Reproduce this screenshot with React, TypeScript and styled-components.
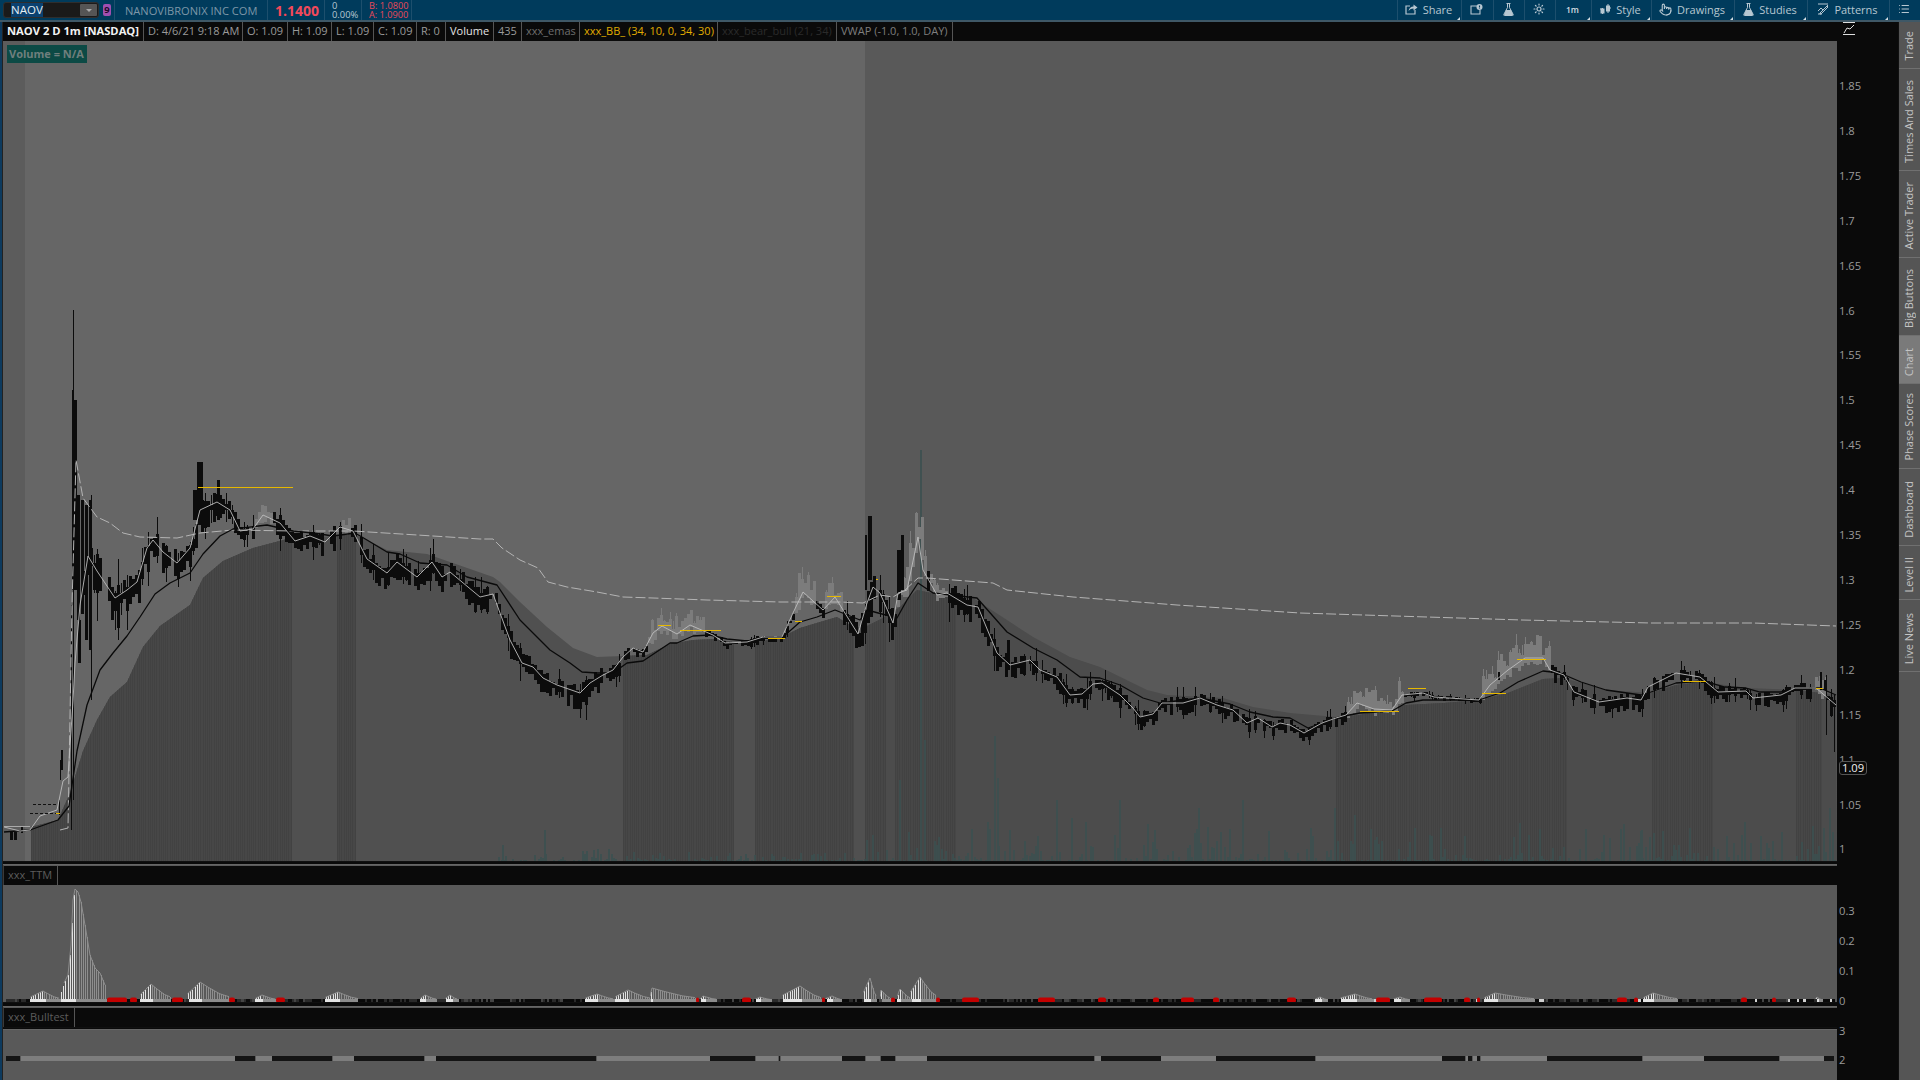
import React from 'react';
import styled, { createGlobalStyle } from 'styled-components';
import { List, Pointer, Sun } from 'lucide-react';

type Pt = [number, number];

const lerp = (pts: Pt[], x: number): number => {
  if (x <= pts[0][0]) return pts[0][1];
  for (let i = 1; i < pts.length; i++) {
    if (x <= pts[i][0]) {
      const [x0, y0] = pts[i - 1];
      const [x1, y1] = pts[i];
      return y0 + ((y1 - y0) * (x - x0)) / (x1 - x0 || 1);
    }
  }
  return pts[pts.length - 1][1];
};

const rng = (seed: number) => () => {
  seed = (seed + 0x6d2b79f5) | 0;
  let t = Math.imul(seed ^ (seed >>> 15), 1 | seed);
  t = (t + Math.imul(t ^ (t >>> 7), 61 | t)) ^ t;
  return ((t ^ (t >>> 14)) >>> 0) / 4294967296;
};

const line = (pts: Pt[]) => 'M' + pts.map(p => p.join(' ')).join('L');

const slowLine: Pt[] = [[4,832],[30,830],[58,820],[69,806],[77,751],[87,705],[100,670],[113,653],[127,636],[140,617],[155,594],[170,583],[190,573],[203,554],[220,536],[233,529],[267,525],[293,531],[313,533],[333,536],[355,533],[367,540],[387,552],[400,554],[420,563],[447,565],[467,577],[497,585],[520,620],[550,650],[570,663],[582,672],[597,673],[613,673],[627,663],[643,661],[670,643],[677,643],[693,636],[710,635],[727,639],[747,641],[767,638],[783,637],[800,622],[817,617],[835,610],[860,620],[867,610],[897,618],[907,600],[918,583],[933,593],[977,598],[1007,632],[1033,648],[1057,660],[1080,677],[1100,678],[1120,685],[1143,698],[1160,703],[1200,698],[1230,704],[1250,712],[1273,717],[1290,718],[1308,728],[1325,722],[1339,717],[1360,713],[1392,711],[1406,703],[1423,700],[1444,700],[1479,700],[1500,693],[1518,682],[1543,671],[1560,673],[1581,682],[1606,690],[1641,695],[1651,692],[1676,683],[1704,681],[1725,687],[1746,688],[1760,692],[1781,692],[1802,688],[1820,688],[1836,695]];

const fastLine: Pt[] = [[4,827],[20,831],[30,830],[40,816],[57,810],[63,781],[68,777],[73,701],[75,663],[80,605],[88,556],[97,571],[107,586],[115,598],[127,590],[137,582],[147,548],[153,540],[163,552],[177,563],[190,548],[200,510],[217,502],[230,510],[240,531],[253,529],[263,515],[280,523],[295,541],[310,536],[325,542],[340,527],[353,531],[367,559],[387,573],[397,562],[417,577],[432,562],[442,577],[450,572],[480,597],[493,594],[500,613],[510,640],[522,663],[533,667],[543,678],[557,685],[580,693],[590,683],[603,675],[613,670],[623,657],[633,648],[643,652],[653,633],[662,626],[677,634],[690,625],[713,635],[725,643],[747,642],[763,637],[782,637],[793,613],[803,592],[823,610],[835,597],[848,618],[858,634],[867,603],[873,587],[880,593],[893,623],[898,593],[907,590],[918,537],[923,570],[937,595],[947,593],[967,605],[978,607],[997,653],[1010,665],[1030,660],[1040,670],[1057,677],[1070,695],[1082,694],[1093,684],[1102,683],[1120,695],[1133,708],[1140,717],[1153,714],[1162,703],[1183,703],[1200,698],[1217,705],[1233,710],[1247,723],[1258,718],[1272,727],[1280,723],[1290,725],[1304,733],[1322,723],[1336,718],[1346,715],[1357,703],[1374,709],[1392,710],[1402,695],[1423,693],[1434,697],[1479,700],[1490,685],[1508,670],[1525,658],[1543,658],[1550,670],[1564,675],[1574,692],[1599,702],[1627,698],[1641,700],[1648,687],[1676,673],[1700,677],[1718,692],[1746,691],[1753,698],[1781,695],[1795,688],[1816,688],[1836,705]];

const vwapLine: Pt[] = [[60,830],[68,828],[72,605],[76,460],[83,498],[97,517],[110,523],[123,533],[140,537],[177,538],[200,533],[233,530],[293,531],[353,531],[433,536],[480,539],[493,539],[502,548],[520,560],[538,568],[548,582],[567,587],[597,592],[623,597],[653,598],[707,600],[780,602],[840,602],[863,603],[880,595],[893,597],[905,590],[918,578],[927,578],[993,583],[1007,590],[1073,597],[1177,605],[1300,613],[1522,620],[1651,623],[1753,623],[1836,626]];

const fillCurve: Pt[] = [[31,827],[58,820],[70,793],[83,751],[97,720],[110,697],[127,682],[143,647],[160,626],[190,605],[203,578],[223,561],[253,548],[287,539],[333,536],[353,534],[367,540],[387,550],[427,554],[493,577],[500,582],[520,602],[547,627],[573,648],[597,657],[623,656],[647,655],[670,644],[693,640],[713,639],[733,642],[757,642],[780,638],[800,628],[820,622],[837,617],[853,627],[865,627],[883,618],[900,607],[917,590],[950,597],[973,598],[1007,620],[1033,637],[1070,657],[1100,667],[1147,690],[1167,695],[1223,698],[1253,707],[1290,713],[1336,717],[1360,715],[1406,705],[1444,703],[1480,700],[1508,693],[1543,679],[1564,678],[1606,690],[1651,693],[1676,685],[1704,682],[1746,688],[1797,690],[1836,695]];

const stripeZones: Pt[] = [[31,291],[337,355],[623,734],[755,854],[865,886],[895,956],[1336,1567],[1652,1713],[1796,1822]];

const yellowMarks: [number, number, number][] = [[198,293,487],[56,60,813],[658,671,625],[680,721,630],[768,785,638],[795,802,621],[827,841,596],[876,878,579],[1360,1399,711],[1408,1426,688],[1482,1506,693],[1517,1546,659],[1683,1706,681],[1816,1823,688]];

const grayZones: [number, number, number][] = [[255,270,14],[340,350,10],[648,702,16],[795,815,28],[825,842,22],[895,905,12],[906,925,42],[930,945,12],[1346,1402,18],[1480,1548,22],[1815,1825,14]];

const volatility: Pt[] = [[60,10],[76,55],[100,55],[115,48],[130,34],[200,34],[240,22],[300,24],[360,28],[500,28],[600,26],[640,9],[800,8],[870,36],[950,34],[1040,22],[1200,18],[1336,13],[1420,5],[1480,5],[1560,18],[1650,18],[1836,16]];

const inZone = (x: number) => grayZones.some(z => x >= z[0] && x <= z[1]);

const buildCandles = () => {
  const r = rng(42);
  let black = '';
  let gray = '';
  const rect = (x: number, t: number, b: number, w: number) =>
    `M${x} ${Math.round(t)}h${w}V${Math.round(b)}h-${w}Z`;
  for (let fx = 78; fx < 1835; fx += 3) {
    const x = Math.round(fx);
    const c = lerp(fastLine, x);
    const v = lerp(volatility, x);
    if (inZone(x)) {
      const gv = grayZones.find(z => x >= z[0] && x <= z[1])![2];
      const top = c - 2 - r() * gv;
      gray += rect(x, top, c + r() * 8, 3);
      if (r() < 0.4) gray += rect(x + 1, top - r() * gv * 0.5, top + 1, 1);
      continue;
    }
    if (r() < 0.1) continue;
    const a = c - v * 0.35 * r();
    const b = c + v * (0.12 + 0.6 * r());
    black += rect(x, a, b, 3);
    if (r() < 0.3) black += rect(x + 1, a - r() * v * 0.6, b + r() * v * 0.6, 1);
  }
  const explicit: [number, number, number, number][] = [[72,390,590,2],[74,400,590,3],[73,310,800,1],[71,605,830,1],[61,750,770,2],[59,800,815,1],[60,760,780,1],[10,832,840,3],[14,832,840,3],[21,827,833,2],[77,495,620,3],[81,500,610,3],[85,505,640,3],[89,500,650,3],[91,495,700,1],[197,462,520,6],[193,490,520,4],[217,480,520,3],[865,535,590,2],[868,516,580,4],[897,550,600,4],[901,535,590,3],[1498,672,680,2],[1007,640,670,3],[1824,680,690,3],[1826,675,735,1],[1820,672,690,2],[1830,700,716,3],[1834,703,752,1]];
  explicit.forEach(e => { black += rect(e[0], e[1], e[2], e[3]); });
  return { black, gray };
};

const buildStripes = () => {
  let d = '';
  stripeZones.forEach(([a, b]) => {
    for (let x = a; x < b; x += 2.2) d += `M${Math.round(x)} 480V861`;
  });
  return d;
};

const buildVolume = () => {
  const r = rng(7);
  let d = '';
  for (let fx = 495; fx < 1835; fx += 2.2) {
    const x = Math.round(fx);
    const k = r();
    if (k < 0.4) continue;
    const scale = x < 620 ? 12 : x < 865 ? 8 : 38;
    const h = Math.pow(r(), 3.6) * scale + 1;
    d += `M${x} 861V${Math.round(861 - h)}`;
  }
  const tall: Pt[] = [[921,450],[925,740],[900,780],[995,736],[998,778],[1057,800],[1072,818],[1086,822],[1120,800],[1243,800],[1199,808],[1335,808],[1355,815],[545,830],[503,845],[1830,808],[1824,828],[1642,830],[1761,836],[1610,838]];
  tall.forEach(([x, y]) => { d += `M${x} 861V${y}`; });
  return d;
};

const peak = (x0: number, xp: number, x1: number, h: number): Pt[] => [
  [x0, 0], [x0 + 0.5, h * 0.35], [(x0 + xp) / 2, h * 0.65], [xp, h],
  [xp + (x1 - xp) * 0.3, h * 0.7], [xp + (x1 - xp) * 0.7, h * 0.35], [x1, h * 0.2], [x1 + 0.5, 0],
];

const ttmPeaks: Pt[][] = [
  peak(30, 43, 59, 9),
  [[60,5],[64,17],[68,25],[71,55],[73,100],[75,111],[78,108],[81,98],[85,75],[90,45],[95,32],[100,27],[105,15],[106,0]],
  peak(140, 151, 170, 16), peak(187, 200, 228, 18), peak(255, 262, 275, 5),
  peak(325, 338, 357, 8), peak(420, 425, 436, 5), peak(445, 450, 457, 5),
  peak(585, 597, 613, 6), peak(615, 628, 650, 10), peak(650, 652, 695, 12), peak(700, 703, 716, 4),
  peak(755, 760, 770, 3), peak(782, 800, 820, 14), peak(825, 832, 840, 4),
  peak(863, 870, 876, 22), peak(880, 881, 890, 10), peak(897, 900, 910, 11), peak(910, 920, 936, 23),
  peak(1315, 1320, 1326, 3), peak(1340, 1355, 1372, 6), peak(1393, 1400, 1408, 3),
  peak(1484, 1495, 1534, 7), peak(1643, 1653, 1677, 7), peak(1815, 1817, 1821, 3),
];

const redZones: Pt[] = [[107,127],[130,137],[172,183],[229,235],[276,285],[696,699],[742,751],[822,825],[891,895],[936,940],[962,979],[1038,1055],[1098,1106],[1153,1159],[1181,1194],[1213,1219],[1287,1296],[1376,1390],[1424,1442],[1464,1470],[1477,1480],[1617,1627],[1634,1638],[1741,1747],[1772,1776]];

const buildTtm = () => {
  const r = rng(11);
  let rise = '';
  let fall = '';
  ttmPeaks.forEach(p => {
    const px = p.reduce((m, q) => (q[1] > m[1] ? q : m), p[0])[0];
    for (let fx = p[0][0] + 1; fx < p[p.length - 1][0]; fx += 2.2) {
      const x = Math.round(fx);
      const h = lerp(p, x);
      if (x <= px) rise += `M${x} 1000V${(1000 - h).toFixed(0)}`;
      else fall += `M${x} 1000V${(1000 - h).toFixed(0)}`;
    }
  });
  const outline = ttmPeaks.map(p => line(p.slice(1, -1).map(q => [q[0], 1000 - q[1]] as Pt))).join('');
  const dots: { x: number; c: string }[] = [];
  for (let fx = 6; fx < 1834; fx += 2.2) {
    const x = Math.round(fx);
    const p = ttmPeaks.find(q => x >= q[0][0] && x <= q[q.length - 1][0]);
    const k = r();
    let c = k < 0.5 ? '#0a0a0a' : k < 0.85 ? '#2a2a2a' : '#444';
    if (p) {
      const px = p.reduce((m, q) => (q[1] > m[1] ? q : m), p[0])[0];
      c = x <= px ? '#e4e4e4' : '#8c8c8c';
    } else if (x > 1300 && k > 0.7 && x % 3 === 0) c = '#cfcfcf';
    dots.push({ x, c });
  }
  return { rise, fall, outline, dots };
};

const bullSegments: [number, number, boolean][] = [[6,20,true],[21,235,false],[235,255,true],[256,272,false],[272,332,true],[333,354,false],[354,424,true],[425,436,false],[436,596,true],[597,710,false],[710,755,true],[756,778,false],[779,780,true],[781,842,false],[842,865,true],[866,880,false],[881,895,true],[896,927,false],[927,1094,true],[1095,1101,false],[1101,1161,true],[1161,1216,false],[1216,1315,true],[1316,1442,false],[1442,1465,true],[1466,1468,false],[1468,1472,true],[1473,1477,false],[1477,1480,true],[1481,1547,false],[1547,1642,true],[1643,1704,false],[1704,1779,true],[1780,1824,false],[1824,1834,true]];

const candles = buildCandles();
const stripes = buildStripes();
const volume = buildVolume();
const ttm = buildTtm();
const fillPath = line(fillCurve) + 'L1837 861L31 861Z';

const GlobalStyle = createGlobalStyle`
  html, body { margin: 0; padding: 0; background: #0a0a0a; }
  #root { width: 1920px; height: 1080px; overflow: hidden; }
`;

const Page = styled.div`
  width: 1920px;
  height: 1080px;
  display: flex;
  flex-direction: column;
  background: #0a0a0a;
  font-family: 'Open Sans', 'Liberation Sans', sans-serif;
  overflow: hidden;
`;

const TopBar = styled.header`
  height: 20px;
  flex: none;
  display: flex;
  align-items: stretch;
  background: #003b5c;
  border-bottom: 2px solid #3f5866;
  box-sizing: content-box;
  color: #b7c7d1;
  font-size: 11px;
`;

const BarCell = styled.div<{ $w: number }>`
  width: ${p => p.$w}px;
  flex: none;
  box-sizing: border-box;
  display: flex;
  align-items: center;
  border-right: 1px solid #1d4f6d;
  white-space: nowrap;
`;

const SymbolCell = styled(BarCell)`
  padding-left: 3px;
  gap: 4px;
  position: relative;
`;

const SymbolBox = styled.div`
  width: 96px;
  height: 16px;
  box-sizing: border-box;
  background: #1a1a1a;
  border: 1px solid #2e2e2e;
  border-radius: 3px;
  display: flex;
  align-items: center;
  justify-content: space-between;
  padding: 0 1px 0 7px;
`;

const SymbolText = styled.span`
  background: #0a4170;
  color: #e6eef2;
  font-size: 11.5px;
  line-height: 14px;
`;

const DropButton = styled.span`
  width: 17px;
  height: 12px;
  background: #555;
  border-radius: 1px;
  display: flex;
  align-items: center;
  justify-content: center;
  &::after {
    content: '';
    border-left: 3px solid transparent;
    border-right: 3px solid transparent;
    border-top: 3px solid #aaa;
  }
`;

const LinkBadge = styled.span`
  width: 8px;
  height: 12px;
  background: #a04fb0;
  border-radius: 2px;
  color: #1e0a28;
  font-size: 9.5px;
  font-weight: 700;
  line-height: 12px;
  text-align: center;
`;

const CompanyCell = styled(BarCell)`
  padding-left: 10px;
  color: #7d97a8;
  font-size: 11.1px;
`;

const PriceCell = styled(BarCell)`
  padding-left: 7px;
  color: #f2495a;
  font-size: 14px;
  font-weight: 700;
`;

const StackCell = styled(BarCell)`
  flex-direction: column;
  align-items: flex-start;
  justify-content: center;
  padding-left: 7px;
  font-size: 9.4px;
  line-height: 9.5px;
`;

const RedStackCell = styled(StackCell)`
  color: #e8485a;
  font-size: 9.2px;
`;

const Tools = styled.nav`
  margin-left: auto;
  display: flex;
  align-items: stretch;
`;

const ToolButton = styled.button<{ $w: number }>`
  width: ${p => p.$w}px;
  box-sizing: border-box;
  position: relative;
  border: 0;
  border-left: 1px solid #1d4f6d;
  background: transparent;
  color: #b7c7d1;
  font: inherit;
  font-size: 11px;
  display: flex;
  align-items: center;
  justify-content: center;
  gap: 5px;
  padding: 0 2px 2px 0;
  &::after {
    content: '';
    display: ${p => (p.$w > 32 ? 'block' : 'none')};
    position: absolute;
    right: 1px;
    bottom: 0;
    border-left: 3px solid transparent;
    border-bottom: 3px solid #d4dde2;
  }
`;

const TinyLabel = styled.span`
  font-size: 8.5px;
  font-weight: 600;
  color: #d4dde2;
`;

const Workspace = styled.main`
  flex: 1;
  min-height: 0;
  display: flex;
  align-items: stretch;
`;

const LeftEdge = styled.div`
  width: 3px;
  flex: none;
  background: linear-gradient(90deg, #0d3a5e 0 2px, #222 2px);
`;

const ChartColumn = styled.section`
  width: 1834px;
  flex: none;
  display: flex;
  flex-direction: column;
`;

const StudyRow = styled.div<{ $h: number }>`
  height: ${p => p.$h}px;
  flex: none;
  box-sizing: border-box;
  display: flex;
  align-items: stretch;
  background: #0a0a0a;
  font-size: 11px;
  color: #9a9a9a;
`;

const StudyCell = styled.div<{ $w?: number; $tone?: string; $bold?: boolean }>`
  ${p => (p.$w ? `width: ${p.$w}px; flex: none;` : 'flex: 1;')}
  box-sizing: border-box;
  padding-left: 4px;
  line-height: 18px;
  white-space: nowrap;
  overflow: hidden;
  color: ${p => p.$tone ?? '#9a9a9a'};
  font-weight: ${p => (p.$bold ? 700 : 400)};
  font-size: ${p => (p.$bold ? 11.2 : 11)}px;
  border-right: 1px solid ${p => (p.$w ? '#555' : 'transparent')};
`;

const SubHeaderRow = styled(StudyRow)`
  border-top: 1px solid #5a5a5a;
  border-left: 1px solid #3a3a3a;
`;

const Divider = styled.div<{ $h: number }>`
  height: ${p => p.$h}px;
  flex: none;
  background: #0a0a0a;
  position: relative;
`;

const DividerRule = styled(Divider)`
  border-top: 1px solid #101010;
  border-bottom: 1px solid #666;
  box-sizing: border-box;
`;

const MainPane = styled.div`
  height: 820px;
  flex: none;
  position: relative;
  background: #595959;
`;

const PaneSvg = styled.svg`
  display: block;
  width: 100%;
  height: 100%;
`;

const SubPane = styled.div<{ $h?: number }>`
  ${p => (p.$h ? `height: ${p.$h}px; flex: none;` : 'flex: 1;')}
  background: #595959;
  min-height: 0;
`;

const VolumeTag = styled.div`
  position: absolute;
  left: 4px;
  top: 4px;
  height: 18px;
  width: 80px;
  background: #0c4a45;
  color: #6f7f7d;
  font-size: 11px;
  font-weight: 700;
  line-height: 18px;
  padding-left: 2px;
  box-sizing: border-box;
`;

const Axis = styled.aside`
  width: 61px;
  flex: none;
  position: relative;
  background: #0a0a0a;
  color: #9a9a9a;
  font-size: 11.2px;
  display: flex;
  flex-direction: column;
  padding-left: 2px;
  box-sizing: border-box;
`;

const AxisMark = styled.svg`
  position: absolute;
  left: 6px;
  top: 0;
`;

const AxisSpacer = styled.div<{ $h: number }>`
  height: ${p => p.$h}px;
  flex: none;
`;

const Tick = styled.div<{ $h: number }>`
  height: ${p => p.$h}px;
  line-height: ${p => p.$h}px;
  flex: none;
`;

const PriceBadge = styled.div`
  position: absolute;
  left: 2px;
  top: 739px;
  width: 28px;
  height: 14px;
  box-sizing: border-box;
  border: 1px solid #555;
  border-radius: 3px;
  background: #0a0a0a;
  color: #f0f0f0;
  font-size: 11.2px;
  line-height: 12px;
  padding-left: 2px;
`;

const Rail = styled.aside`
  flex: 1;
  display: flex;
  flex-direction: column;
  background: #555;
  border-left: 1px solid #111;
`;

const RailTab = styled.div<{ $h: number; $active?: boolean }>`
  height: ${p => p.$h}px;
  flex: none;
  box-sizing: border-box;
  border-bottom: 1px solid #707070;
  background: ${p => (p.$active ? '#7a7a7a' : 'transparent')};
  color: #c4c4c4;
  font-size: 11px;
  display: flex;
  align-items: center;
  justify-content: flex-end;
  padding: 0 2px 7px 0;
  writing-mode: vertical-rl;
`;

const RailText = styled.span`
  display: block;
  transform: rotate(180deg);
  white-space: nowrap;
  line-height: 18px;
`;

const ShareIcon = () => (
  <svg width="13" height="12" viewBox="0 0 13 12" fill="none" stroke="currentColor" strokeWidth="1.2">
    <path d="M5 3H1v8h9V7" />
    <path d="M3.5 8c.5-3 2.5-4.5 5-4.5V1.5L12.5 4.5 8.5 7.5V5.5c-2 0-3.700.8-5 2.500z" fill="currentColor" stroke="none" />
  </svg>
);
const CalendarIcon = () => (
  <svg width="13" height="11" viewBox="0 0 13 11" fill="none" stroke="currentColor" strokeWidth="1.1">
    <path d="M7 2H1v8h9V6" />
    <circle cx="9.500" cy="3" r="3" fill="currentColor" stroke="none" />
    <path d="M9.500 1.500v2M9.500 4.200v.5" stroke="#003b5c" />
  </svg>
);
const FlaskIcon = () => (
  <svg width="11" height="13" viewBox="0 0 11 13" fill="none" stroke="currentColor">
    <path d="M3.500.5h4M4.500.5v4L.8 11.500q-.3 1 .7 1h8q1 0 .7-1L6.500 4.500v-4" strokeWidth="1" />
    <path d="M3 7h5l2.200 5H1z" fill="currentColor" stroke="none" />
  </svg>
);
const CandleIcon = () => (
  <svg width="11" height="13" viewBox="0 0 11 13" fill="currentColor" stroke="currentColor" strokeWidth="1">
    <path d="M2.500 5v6M8 1v9M0 6h2.500M8 5h3" />
    <rect x="1" y="6" width="3" height="4" />
    <rect x="6.500" y="3" width="3" height="5" />
  </svg>
);
const PatternIcon = () => (
  <svg width="12" height="12" viewBox="0 0 12 12" fill="none" stroke="currentColor" strokeWidth="1">
    <path d="M1 1h10M1 11h4" />
    <path d="M1 8l3-3 2 2 5-5" />
    <path d="M3 10l7-7 1 1-7 7H3z" />
  </svg>
);

const priceTicks = ['1.85','1.8','1.75','1.7','1.65','1.6','1.55','1.5','1.45','1.4','1.35','1.3','1.25','1.2','1.15','1.1','1.05','1'];
const railTabs: [string, number, boolean?][] = [['Trade',47],['Times And Sales',102],['Active Trader',87],['Big Buttons',78],['Chart',48,true],['Phase Scores',85],['Dashboard',77],['Level II',54],['Live News',72]];
const headerCells: [string, number, string?, boolean?][] = [
  ['NAOV 2 D 1m [NASDAQ]',141,'#f2f2f2',true],['D: 4/6/21 9:18 AM',99],['O: 1.09',45],['H: 1.09',44],['L: 1.09',42],['C: 1.09',43],['R: 0',29],['Volume',48,'#e4e4e4'],['435',28],['xxx_emas',58,'#6e6e6e'],['xxx_BB_ (34, 10, 0, 34, 30)',138,'#e0ac00'],['xxx_bear_bull (21, 34)',119,'#2a2a2a'],['VWAP (-1.0, 1.0, DAY)',116,'#7e7e7e'],
];

export default function App() {
  return (
    <Page>
      <GlobalStyle />
      <TopBar>
        <SymbolCell $w={115}>
          <SymbolBox>
            <SymbolText>NAOV</SymbolText>
            <DropButton />
          </SymbolBox>
          <LinkBadge>9</LinkBadge>
        </SymbolCell>
        <CompanyCell $w={153}>NANOVIBRONIX INC COM</CompanyCell>
        <PriceCell $w={57}>1.1400</PriceCell>
        <StackCell $w={37}><span>0</span><span>0.00%</span></StackCell>
        <RedStackCell $w={50}><span>B: 1.0800</span><span>A: 1.0900</span></RedStackCell>
        <Tools>
          <ToolButton $w={64}><ShareIcon />Share</ToolButton>
          <ToolButton $w={32}><CalendarIcon /></ToolButton>
          <ToolButton $w={31}><FlaskIcon /></ToolButton>
          <ToolButton $w={31}><Sun size={12} strokeWidth={2.4} /></ToolButton>
          <ToolButton $w={36}><TinyLabel>1m</TinyLabel></ToolButton>
          <ToolButton $w={60}><CandleIcon />Style</ToolButton>
          <ToolButton $w={83}><Pointer size={13} />Drawings</ToolButton>
          <ToolButton $w={73}><FlaskIcon />Studies</ToolButton>
          <ToolButton $w={82}><PatternIcon />Patterns</ToolButton>
          <ToolButton $w={31}><List size={12} /></ToolButton>
        </Tools>
      </TopBar>
      <Workspace>
        <LeftEdge />
        <ChartColumn>
          <StudyRow $h={19}>
            {headerCells.map(([label, w, tone, bold]) => (
              <StudyCell key={label} $w={w} $tone={tone} $bold={bold}>{label}</StudyCell>
            ))}
            <StudyCell />
          </StudyRow>
          <MainPane>
            <PaneSvg viewBox="3 41 1834 820" shapeRendering="crispEdges">
              <rect x="3" y="41" width="22" height="820" fill="#5c5c5c" />
              <rect x="25" y="41" width="840" height="820" fill="#666" />
              <clipPath id="under"><path d={fillPath} /></clipPath>
              <g clipPath="url(#under)">
                <rect x="3" y="41" width="862" height="820" fill="#505050" />
                <rect x="865" y="41" width="972" height="820" fill="#4c4c4c" />
                {stripeZones.map(([a, b]) => (
                  <rect key={a} x={a} y="480" width={b - a} height="381" fill="#474747" />
                ))}
                <path d={stripes} stroke="#424242" strokeWidth="1" />
              </g>
              <path d={volume} stroke="#3c5050" strokeWidth="2" opacity="0.85" />
              <path d={candles.gray} fill="#7c7c7c" />
              <path d={candles.black} fill="#0c0c0c" />
              <g shapeRendering="auto" fill="none" strokeLinejoin="round">
                <path d={line(vwapLine)} stroke="#b4b4b4" strokeWidth="1" strokeDasharray="10 3" />
                <path d={line(slowLine)} stroke="#0a0a0a" strokeWidth="1.300" />
                <path d={line(fastLine)} stroke="#bdbdbd" strokeWidth="0.900" />
              </g>
              <path d="M33 804H58M30 813H58" stroke="#111" strokeDasharray="3 2" />
              <path d="M4 826H30" stroke="#aaa" />
              {yellowMarks.map(([a, b, y]) => (
                <path key={a} d={`M${a} ${y}H${b}`} stroke="#e6b800" strokeWidth="1" />
              ))}
            </PaneSvg>
            <VolumeTag>Volume = N/A</VolumeTag>
          </MainPane>
          <DividerRule $h={4} />
          <SubHeaderRow $h={20}>
            <StudyCell $w={54} $tone="#5c5c5c">xxx_TTM</StudyCell>
            <StudyCell />
          </SubHeaderRow>
          <SubPane $h={117}>
            <PaneSvg viewBox="3 885 1834 117" shapeRendering="crispEdges">
              <path d={ttm.rise} stroke="#e2e2e2" />
              <path d={ttm.fall} stroke="#8e8e8e" />
              <path d={ttm.outline} stroke="#8e8e8e" fill="none" shapeRendering="auto" />
              {ttm.dots.map(d => (
                <rect key={d.x} x={d.x} y="998.500" width="3" height="3.500" fill={d.c} />
              ))}
              {redZones.map(([a, b]) => (
                <rect key={a} x={a} y="997.500" width={b - a} height="5" rx="2" fill="#c40000" shapeRendering="auto" />
              ))}
            </PaneSvg>
          </SubPane>
          <DividerRule $h={5} />
          <SubHeaderRow $h={20}>
            <StudyCell $w={71} $tone="#5c5c5c">xxx_Bulltest</StudyCell>
            <StudyCell />
          </SubHeaderRow>
          <DividerRule $h={3} />
          <SubPane>
            <PaneSvg viewBox="3 1030 1834 50" shapeRendering="crispEdges">
              {bullSegments.map(([a, b, dark]) => (
                <rect key={a} x={a} y="1056" width={b - a} height="5" fill={dark ? '#141414' : '#7d7d7d'} />
              ))}
            </PaneSvg>
          </SubPane>
        </ChartColumn>
        <Axis>
          <AxisMark width="12" height="14" viewBox="0 0 12 14" fill="none" stroke="#ddd">
            <path d="M0 .5h12M0 12.500h12M1 11l3-5 3 1 4-4" />
          </AxisMark>
          <AxisSpacer $h={42} />
          {priceTicks.map(t => <Tick key={t} $h={44.920}>{t}</Tick>)}
          <AxisSpacer $h={23.500} />
          {['0.3','0.2','0.1','0'].map(t => <Tick key={t} $h={30}>{t}</Tick>)}
          {['3','2'].map(t => <Tick key={t} $h={29}>{t}</Tick>)}
          <PriceBadge>1.09</PriceBadge>
        </Axis>
        <Rail>
          {railTabs.map(([label, h, active]) => (
            <RailTab key={label} $h={h} $active={active}><RailText>{label}</RailText></RailTab>
          ))}
        </Rail>
      </Workspace>
    </Page>
  );
}
